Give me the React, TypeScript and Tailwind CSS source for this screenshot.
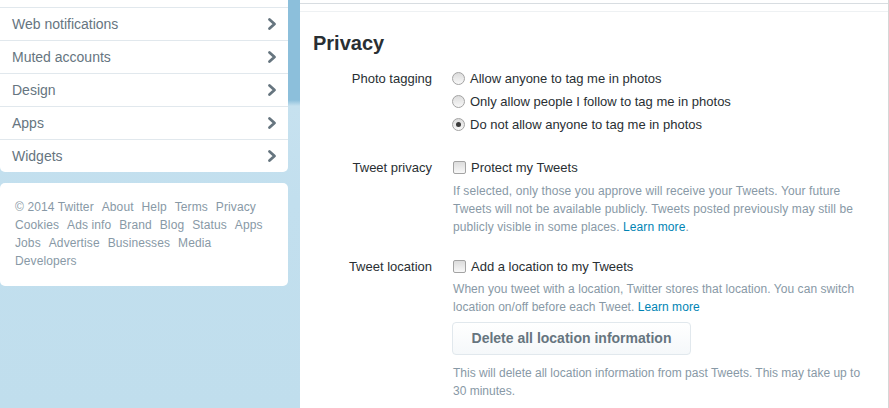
import React from "react";

const Chevron = () => (
  <svg width="10" height="14" viewBox="0 0 10 14" className="shrink-0">
    <path d="M2.5 2.5 L7.5 7 L2.5 11.5" fill="none" stroke="#66757f" strokeWidth="2.8" strokeLinecap="round" strokeLinejoin="round" />
  </svg>
);

const Radio = ({ checked }: { checked?: boolean }) => (
  <span className="w-[13px] h-[13px] rounded-full border border-[#a3a3a3] bg-gradient-to-b from-[#dcdcdc] to-[#f8f8f8] flex items-center justify-center shrink-0">
    {checked && <span className="w-[5px] h-[5px] rounded-full bg-[#3a3a3a]" />}
  </span>
);

const Checkbox = () => (
  <span className="w-[13px] h-[13px] rounded-[2px] border border-[#a3a3a3] bg-gradient-to-b from-[#dcdcdc] to-[#f8f8f8] shrink-0" />
);

const navItems = ["Web notifications", "Muted accounts", "Design", "Apps", "Widgets"];

const footerLines = [
  ["© 2014 Twitter", "About", "Help", "Terms", "Privacy"],
  ["Cookies", "Ads info", "Brand", "Blog", "Status", "Apps"],
  ["Jobs", "Advertise", "Businesses", "Media"],
  ["Developers"],
];

export default function App() {
  return (
    <div className="flex w-[889px] h-[408px] overflow-hidden bg-[#c0deed] font-['Liberation_Sans',Arial,sans-serif]">
      {/* Left column */}
      <div className="w-[300px] shrink-0 pr-[12px] bg-[linear-gradient(to_bottom,#8cbfdb_0px,#8cbfdb_100px,#c6e1ef_106px,#c2dfee_200px,#c0deed_100%)]">
        <div className="bg-white rounded-b-[5px]">
          <div className="h-[7px]" />
          {navItems.map((item) => (
            <div key={item} className="h-[33px] border-t border-[#e1e8ed] flex items-center justify-between pl-[12px] pr-[11px]">
              <span className="text-[14px] text-[#66757f]">{item}</span>
              <Chevron />
            </div>
          ))}
        </div>
        <div className="mt-[11px] bg-white rounded-[5px] pl-[15px] pr-[10px] pt-[15px] pb-[16px]">
          {footerLines.map((line, i) => (
            <div key={i} className="flex gap-x-[8px] text-[12px] leading-[18px] tracking-[0.1px] text-[#8899a6] whitespace-nowrap">
              {line.map((l) => (
                <span key={l}>{l}</span>
              ))}
            </div>
          ))}
        </div>
      </div>

      {/* Main panel */}
      <div className="flex-1 bg-white border-r border-[#d6d6d6] flex flex-col">
        <div className="h-[3px]" />
        <div className="h-px bg-[#d8dde1]" />
        <div className="h-[7px]" />
        <div className="h-px bg-[#eef1f3]" />
        <div className="pl-[13px] pt-[19px]">
          <h1 className="text-[20px] leading-[24px] font-bold text-[#292f33]">Privacy</h1>

          <div className="mt-[12px] flex">
            <div className="w-[119px] text-right text-[13px] leading-[23px] text-[#292f33]">Photo tagging</div>
            <div className="ml-[20px] flex flex-col text-[13px] text-[#292f33]">
              <label className="h-[23px] flex items-center gap-[5px]">
                <Radio />
                <span>Allow anyone to tag me in photos</span>
              </label>
              <label className="h-[23px] flex items-center gap-[5px]">
                <Radio />
                <span>Only allow people I follow to tag me in photos</span>
              </label>
              <label className="h-[23px] flex items-center gap-[5px]">
                <Radio checked />
                <span>Do not allow anyone to tag me in photos</span>
              </label>
            </div>
          </div>

          <div className="mt-[20px] flex">
            <div className="w-[119px] text-right text-[13px] leading-[23px] text-[#292f33]">Tweet privacy</div>
            <div className="ml-[20px] flex flex-col">
              <label className="h-[23px] flex items-center gap-[5px] text-[13px] text-[#292f33] pl-px">
                <Checkbox />
                <span>Protect my Tweets</span>
              </label>
              <div className="mt-[3px] text-[12px] leading-[18px] text-[#8899a6] pl-px whitespace-nowrap tracking-[0.1px]">
                <div>If selected, only those you approve will receive your Tweets. Your future</div>
                <div>Tweets will not be available publicly. Tweets posted previously may still be</div>
                <div>
                  publicly visible in some places. <span className="text-[#0084b4]">Learn more</span>.
                </div>
              </div>
            </div>
          </div>

          <div className="mt-[19px] flex">
            <div className="w-[119px] text-right text-[13px] leading-[23px] text-[#292f33]">Tweet location</div>
            <div className="ml-[20px] flex flex-col items-start">
              <label className="h-[23px] flex items-center gap-[5px] text-[13px] text-[#292f33] pl-px">
                <Checkbox />
                <span>Add a location to my Tweets</span>
              </label>
              <div className="mt-[2px] text-[12px] leading-[18px] text-[#8899a6] pl-px whitespace-nowrap tracking-[0.05px]">
                <div>When you tweet with a location, Twitter stores that location. You can switch</div>
                <div>
                  location on/off before each Tweet. <span className="text-[#0084b4]">Learn more</span>
                </div>
              </div>
              <button className="mt-[6px] w-[239px] h-[33px] rounded-[4px] border border-[#e1e8ed] bg-gradient-to-b from-white to-[#f5f8fa] text-[14px] font-bold text-[#66757f]">
                Delete all location information
              </button>
              <div className="mt-[9px] text-[12px] leading-[18px] text-[#8899a6] pl-px whitespace-nowrap">
                <div>This will delete all location information from past Tweets. This may take up to</div>
                <div>30 minutes.</div>
              </div>
            </div>
          </div>
        </div>
      </div>
    </div>
  );
}
